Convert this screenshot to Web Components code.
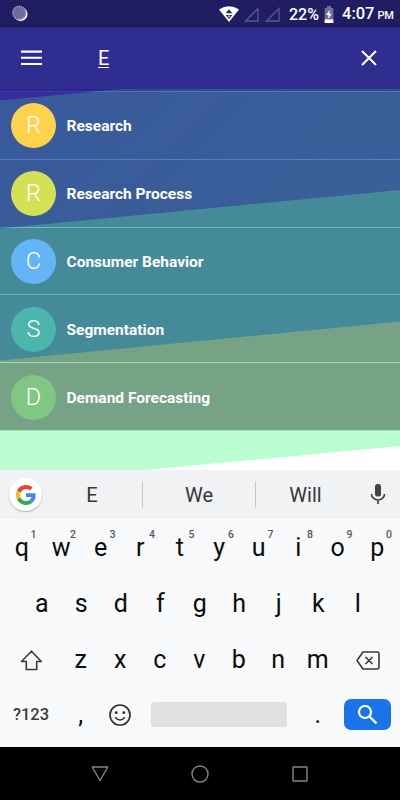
<!DOCTYPE html>
<html lang="en">
<head>
<meta charset="utf-8">
<meta name="viewport" content="width=device-width, initial-scale=1">
<title>Topics</title>
<style>
body{
    margin: 0;
    font-family: Roboto, sans-serif;
}
</style>
</head>
<body>
<topics-app></topics-app>
<script>
class StatusBar extends HTMLElement {
    constructor(){
        super();
        this.attachShadow({mode: 'open'});
    }
    connectedCallback(){
        this.shadowRoot.innerHTML = `
        <style>
        :host{
            display: flex;
            align-items: center;
            box-sizing: border-box;
            height: 27px;
            padding: 1px 8px 0 11px;
            background: linear-gradient(#201d62 24px, #1b1859);
            color: #fff;
            font-size: 16px;
            font-weight: 500;
            line-height: 26px;
        }
        svg{
            display: block;
            flex: none;
        }
        .space{
            flex: 1;
        }
        .wifi{
            margin-right: 5px;
        }
        .sim{
            margin-right: 6px;
        }
        .percent{
            margin-left: 3px;
            padding-top: 1px;
            width: 35px;
            white-space: nowrap;
        }
        .time{
            display: flex;
            align-items: baseline;
            gap: 3px;
            margin-left: 8px;
            padding-top: 1px;
            width: 50px;
            white-space: nowrap;
            font-size: 16.5px;
        }
        small{
            font-size: 11px;
            letter-spacing: -0.2px;
        }
        </style>
        <svg width="18" height="18" viewBox="0 0 18 18">
            <circle cx="9.6" cy="9" r="7" fill="#f1f0fa"/>
            <circle cx="8.2" cy="7.8" r="7" fill="#6e6a9f"/>
            <circle cx="8.2" cy="7.8" r="6.3" fill="none" stroke="#9c99c0" stroke-width="1.4" stroke-dasharray="1.1 1.1"/>
        </svg>
        <span class="space"></span>
        <svg class="wifi" width="20" height="16" viewBox="0 0 20 16">
            <path d="M0 3.4Q10-3 20 3.4L10 16Z" fill="#fff"/>
            <path d="M10 3.2 13.3 7.2H6.7ZM10 13 6.7 9h6.6Z" fill="#27236a"/>
            <path d="m10 11.4-1.2-1.6h2.4Z" fill="#fff"/>
        </svg>
        <svg class="sim" width="15" height="15" viewBox="0 0 15 15"><path d="M1.5 14H14V1.5Z" fill="none" stroke="#5c598c" stroke-width="1.3"/></svg>
        <svg class="sim" width="15" height="15" viewBox="0 0 15 15"><path d="M1.5 14H14V1.5Z" fill="none" stroke="#5c598c" stroke-width="1.3"/></svg>
        <span class="percent">22%</span>
        <svg width="10" height="17" viewBox="0 0 10 17">
            <path d="M3 0h4v2h2.3v15H.7V2H3Z" fill="#716e9c"/>
            <path d="M.7 13.4h8.6V17H.7Z" fill="#fff"/>
            <path d="M5.8 3.8 2.2 9h2.3l-.6 3.8L7.8 7.7H5.3Z" fill="#fff"/>
        </svg>
        <span class="time">4:07<small>PM</small></span>
        `
    }
}
customElements.define('status-bar', StatusBar);

class SearchHeader extends HTMLElement {
    constructor(){
        super();
        this.attachShadow({mode: 'open'});
    }
    connectedCallback(){
        this.shadowRoot.innerHTML = `
        <style>
        :host{
            display: flex;
            align-items: center;
            box-sizing: border-box;
            height: 62px;
            padding: 0 23px 0 21px;
            background: linear-gradient(#2c2985, #302d90 4px);
            color: #fff;
        }
        svg{
            display: block;
            flex: none;
        }
        .query{
            flex: 1;
            margin-left: 56px;
        }
        .query span{
            display: inline-block;
            width: 11px;
            font-size: 20px;
            line-height: 18px;
            padding-top: 1px;
            border-bottom: 1px solid #fff;
            text-align: center;
        }
        </style>
        <svg width="21" height="16" viewBox="0 0 21 16"><path d="M0 1.6h21M0 7.800h21M0 14h21" stroke="#fff" stroke-width="2.1"/></svg>
        <div class="query"><span>E</span></div>
        <svg width="16" height="16" viewBox="0 0 16 16"><path d="m1 1 14 14M15 1 1 15" stroke="#fff" stroke-width="2.1"/></svg>
        `
    }
}
customElements.define('search-header', SearchHeader);

// diagonal colour bands, with the list laid over them in the same grid cell
class BandBackdrop extends HTMLElement {
    constructor(){
        super();
        this.attachShadow({mode: 'open'});
    }
    connectedCallback(){
        this.shadowRoot.innerHTML = `
        <style>
        :host{
            display: grid;
            height: 381px;
            overflow: hidden;
        }
        svg, .content{
            grid-area: 1 / 1;
            min-width: 0;
        }
        svg{
            display: block;
        }
        </style>
        <svg width="400" height="381" viewBox="0 89 400 381">
            <defs>
                <linearGradient id="blue" x1="0" y1="0" x2="1" y2="1">
                    <stop offset="0" stop-color="#598bf3"/>
                    <stop offset="1" stop-color="#5ba0ea"/>
                </linearGradient>
            </defs>
            <path d="M0 89H400V470H0Z" fill="#5347f2"/>
            <path d="M0 100.5 120 89H400V470H0Z" fill="url(#blue)"/>
            <path d="M0 228.5 400 190V470H0Z" fill="#6cd8ef"/>
            <path d="M0 360.5 400 321.5V470H0Z" fill="#b9fdd0"/>
            <path d="M146 470 400 446V470Z" fill="#fff"/>
        </svg>
        <div class="content"><slot></slot></div>
        `
    }
}
customElements.define('band-backdrop', BandBackdrop);

class TopicRow extends HTMLElement {
    constructor(){
        super();
        this.attachShadow({mode: 'open'});
    }
    connectedCallback(){
        this.shadowRoot.innerHTML = `
        <style>
        :host{
            display: flex;
            align-items: center;
            box-sizing: border-box;
            height: 67.8px;
            padding-left: 11px;
            border-bottom: 1px solid rgba(0, 0, 0, 0.13);
            background: rgba(0, 0, 0, 0.36);
            background-clip: padding-box;
            color: #fff;
        }
        .avatar{
            flex: none;
            width: 45px;
            height: 45px;
            margin-top: 1px;
            border-radius: 50%;
            background: ${this.getAttribute('color')};
            font-size: 23.5px;
            font-weight: 300;
            line-height: 45px;
            text-align: center;
        }
        .name{
            margin-left: 10.5px;
            padding-top: 2px;
            font-size: 15.5px;
            font-weight: 700;
            white-space: nowrap;
        }
        </style>
        <div class="avatar">${this.textContent.charAt(0)}</div>
        <div class="name"><slot></slot></div>
        `
    }
}
customElements.define('topic-row', TopicRow);

class SuggestionBar extends HTMLElement {
    constructor(){
        super();
        this.attachShadow({mode: 'open'});
    }
    connectedCallback(){
        const words = this.getAttribute('words').split(',');
        this.shadowRoot.innerHTML = `
        <style>
        :host{
            display: flex;
            align-items: center;
            box-sizing: border-box;
            height: 49px;
            padding: 0 14px 0 9px;
            background: #f1f2f4;
            color: #353638;
            font-size: 20px;
        }
        .logo{
            display: flex;
            align-items: center;
            justify-content: center;
            flex: none;
            width: 33px;
            height: 33px;
            border-radius: 50%;
            background: #fff;
            box-shadow: 0 1px 1.5px rgba(0, 0, 0, 0.28);
        }
        .words{
            display: flex;
            flex: 1;
            margin-right: 15px;
        }
        .word{
            flex: 1;
            height: 27px;
            line-height: 28px;
            text-align: center;
        }
        .word:first-child{
            flex: 0 0 100px;
        }
        .word + .word{
            border-left: 1px solid #c4c6c9;
        }
        .word:nth-child(2){
            flex: 0 0 112px;
        }
        svg{
            display: block;
            flex: none;
        }
        </style>
        <div class="logo">
            <svg width="20" height="20" viewBox="0 0 48 48">
                <path fill="#ea4335" d="M24 9.5c3.5 0 6.700 1.200 9.200 3.600l6.900-6.900C35.900 2.400 30.500 0 24 0 14.600 0 6.500 5.400 2.600 13.200l8 6.200C12.400 13.700 17.700 9.500 24 9.500Z"/>
                <path fill="#4285f4" d="M47 24.600c0-1.600-.2-3.100-.4-4.600H24v9h12.900c-.6 3-2.200 5.500-4.700 7.200l7.700 6C44.400 38 47 31.800 47 24.600Z"/>
                <path fill="#fbbc05" d="M10.500 28.600a14.500 14.500 0 0 1 0-9.200l-8-6.200a24 24 0 0 0 0 21.600Z"/>
                <path fill="#34a853" d="M24 48c6.500 0 11.900-2.100 15.900-5.800l-7.700-6c-2.200 1.500-4.900 2.300-8.200 2.300-6.300 0-11.600-4.200-13.500-9.900l-8 6.200C6.500 42.600 14.600 48 24 48Z"/>
            </svg>
        </div>
        <div class="words">${words.map(word => `<div class="word">${word}</div>`).join('')}</div>
        <svg width="16" height="21" viewBox="0 0 16 21">
            <rect x="5" y="0" width="6" height="12.500" rx="2.500" fill="#444"/>
            <path d="M1.500 10a6.500 6 0 0 0 13 0M8 16v4" fill="none" stroke="#444" stroke-width="1.700"/>
        </svg>
        `
    }
}
customElements.define('suggestion-bar', SuggestionBar);

class KeyCap extends HTMLElement {
    constructor(){
        super();
        this.attachShadow({mode: 'open'});
    }
    connectedCallback(){
        const hint = this.getAttribute('hint');
        this.shadowRoot.innerHTML = `
        <style>
        :host{
            display: flex;
            align-items: center;
            justify-content: center;
            position: relative;
            flex: none;
            width: 39.5px;
            height: 56px;
            font-size: 25px;
            color: #0b0b0c;
        }
        .hint{
            position: absolute;
            left: 28.5px;
            top: 9px;
            font-size: 10.5px;
            font-weight: 500;
            line-height: 13px;
            color: #55575a;
        }
        </style>
        <slot></slot>
        ${hint ? `<span class="hint">${hint}</span>` : ''}
        `
    }
}
customElements.define('key-cap', KeyCap);

class SoftKeyboard extends HTMLElement {
    constructor(){
        super();
        this.attachShadow({mode: 'open'});
    }
    letters(row){
        return [...row].map(letter => `<key-cap>${letter}</key-cap>`).join('');
    }
    connectedCallback(){
        this.shadowRoot.innerHTML = `
        <style>
        :host{
            display: block;
            box-sizing: border-box;
            height: 277px;
            background: #f8f9fb;
        }
        .row{
            display: flex;
            align-items: center;
            height: 56px;
        }
        .top{
            padding-left: 2px;
        }
        .middle{
            padding-left: 22px;
        }
        .side{
            display: flex;
            justify-content: center;
            flex: none;
            width: 61px;
            padding-top: 2px;
        }
        .side.right{
            width: 60px;
        }
        .bottom{
            height: 55px;
        }
        .symbols{
            width: 60px;
            padding-left: 1px;
            font-size: 16.5px;
            font-weight: 500;
            text-align: center;
            color: #3a3b3d;
        }
        .space{
            width: 136px;
            height: 25px;
            margin: 0 11px;
            border-radius: 3px;
            background: #e0e0e0;
        }
        .search{
            display: flex;
            align-items: center;
            justify-content: center;
            width: 47px;
            height: 31px;
            margin-left: 6.5px;
            border-radius: 7px;
            background: #1a73e8;
        }
        svg{
            display: block;
        }
        </style>
        <suggestion-bar words="E,We,Will"></suggestion-bar>
        <div class="row top">
            ${[...'qwertyuiop'].map((letter, i) => `<key-cap hint="${(i + 1) % 10}">${letter}</key-cap>`).join('')}
        </div>
        <div class="row middle">${this.letters('asdfghjkl')}</div>
        <div class="row">
            <div class="side">
                <svg width="22" height="21" viewBox="0 0 22 21"><path d="M11.500 1.200 1.500 11.500H6.300V19.500H16.700V11.500H21.300Z" fill="none" stroke="#38393b" stroke-width="1.600" stroke-linejoin="round"/></svg>
            </div>
            ${this.letters('zxcvbnm')}
            <div class="side right">
                <svg width="24" height="19" viewBox="0 0 24 19"><path d="M7 1h14.500q1.500 0 1.500 1.500v14q0 1.500-1.500 1.500H7L1 9.500Z M9.500 6l7 7M16.500 6l-7 7" fill="none" stroke="#38393b" stroke-width="1.600" stroke-linejoin="round"/></svg>
            </div>
        </div>
        <div class="row bottom">
            <div class="symbols">?123</div>
            <key-cap>,</key-cap>
            <key-cap>
                <svg width="24" height="24" viewBox="0 0 24 24">
                    <circle cx="12" cy="12" r="10" fill="none" stroke="#303133" stroke-width="1.700"/>
                    <circle cx="8.200" cy="9.700" r="1.400" fill="#303133"/>
                    <circle cx="15.800" cy="9.700" r="1.400" fill="#303133"/>
                    <path d="M7.200 14.200Q12 20 16.800 14.200" fill="none" stroke="#303133" stroke-width="1.500"/>
                </svg>
            </key-cap>
            <div class="space"></div>
            <key-cap>.</key-cap>
            <div class="search">
                <svg width="20" height="20" viewBox="0 0 20 20"><circle cx="7" cy="7" r="6" fill="none" stroke="#fff" stroke-width="2.200"/><path d="m11.500 11.500 7 7" stroke="#fff" stroke-width="2.400"/></svg>
            </div>
        </div>
        `
    }
}
customElements.define('soft-keyboard', SoftKeyboard);

class NavBar extends HTMLElement {
    constructor(){
        super();
        this.attachShadow({mode: 'open'});
    }
    connectedCallback(){
        this.shadowRoot.innerHTML = `
        <style>
        :host{
            display: flex;
            align-items: center;
            justify-content: center;
            gap: 82px;
            height: 53px;
            background: #000;
        }
        svg{
            display: block;
            fill: none;
            stroke: #858585;
            stroke-width: 1.400;
        }
        </style>
        <svg width="18" height="18" viewBox="0 0 18 18"><path d="M1.200 2H16.800L9 15.500Z" stroke-linejoin="round"/></svg>
        <svg width="18" height="18" viewBox="0 0 18 18"><circle cx="9" cy="9" r="8"/></svg>
        <svg width="18" height="18" viewBox="0 0 18 18"><rect x="2" y="2" width="14" height="14" rx=".5"/></svg>
        `
    }
}
customElements.define('nav-bar', NavBar);

class TopicsApp extends HTMLElement {
    constructor(){
        super();
        this.attachShadow({mode: 'open'});
    }
    connectedCallback(){
        this.shadowRoot.innerHTML = `
        <style>
        :host{
            display: flex;
            flex-direction: column;
            width: 400px;
            height: 800px;
            overflow: hidden;
            background: #fff;
        }
        .list{
            padding-top: 2px;
            background: linear-gradient(rgba(0, 0, 0, 0.45) 2px, rgba(0, 0, 0, 0.2) 2px, rgba(0, 0, 0, 0.2) 3px, transparent 3px);
        }
        .list topic-row:first-child{
            margin-top: 1px;
        }
        </style>
        <status-bar></status-bar>
        <search-header></search-header>
        <band-backdrop>
            <div class="list">
                <topic-row color="#ffd24d">Research</topic-row>
                <topic-row color="#d4e157">Research Process</topic-row>
                <topic-row color="#64b5f6">Consumer Behavior</topic-row>
                <topic-row color="#4db6ac">Segmentation</topic-row>
                <topic-row color="#81c784">Demand Forecasting</topic-row>
            </div>
        </band-backdrop>
        <soft-keyboard></soft-keyboard>
        <nav-bar></nav-bar>
        `
    }
}
customElements.define('topics-app', TopicsApp);
</script>
</body>
</html>
